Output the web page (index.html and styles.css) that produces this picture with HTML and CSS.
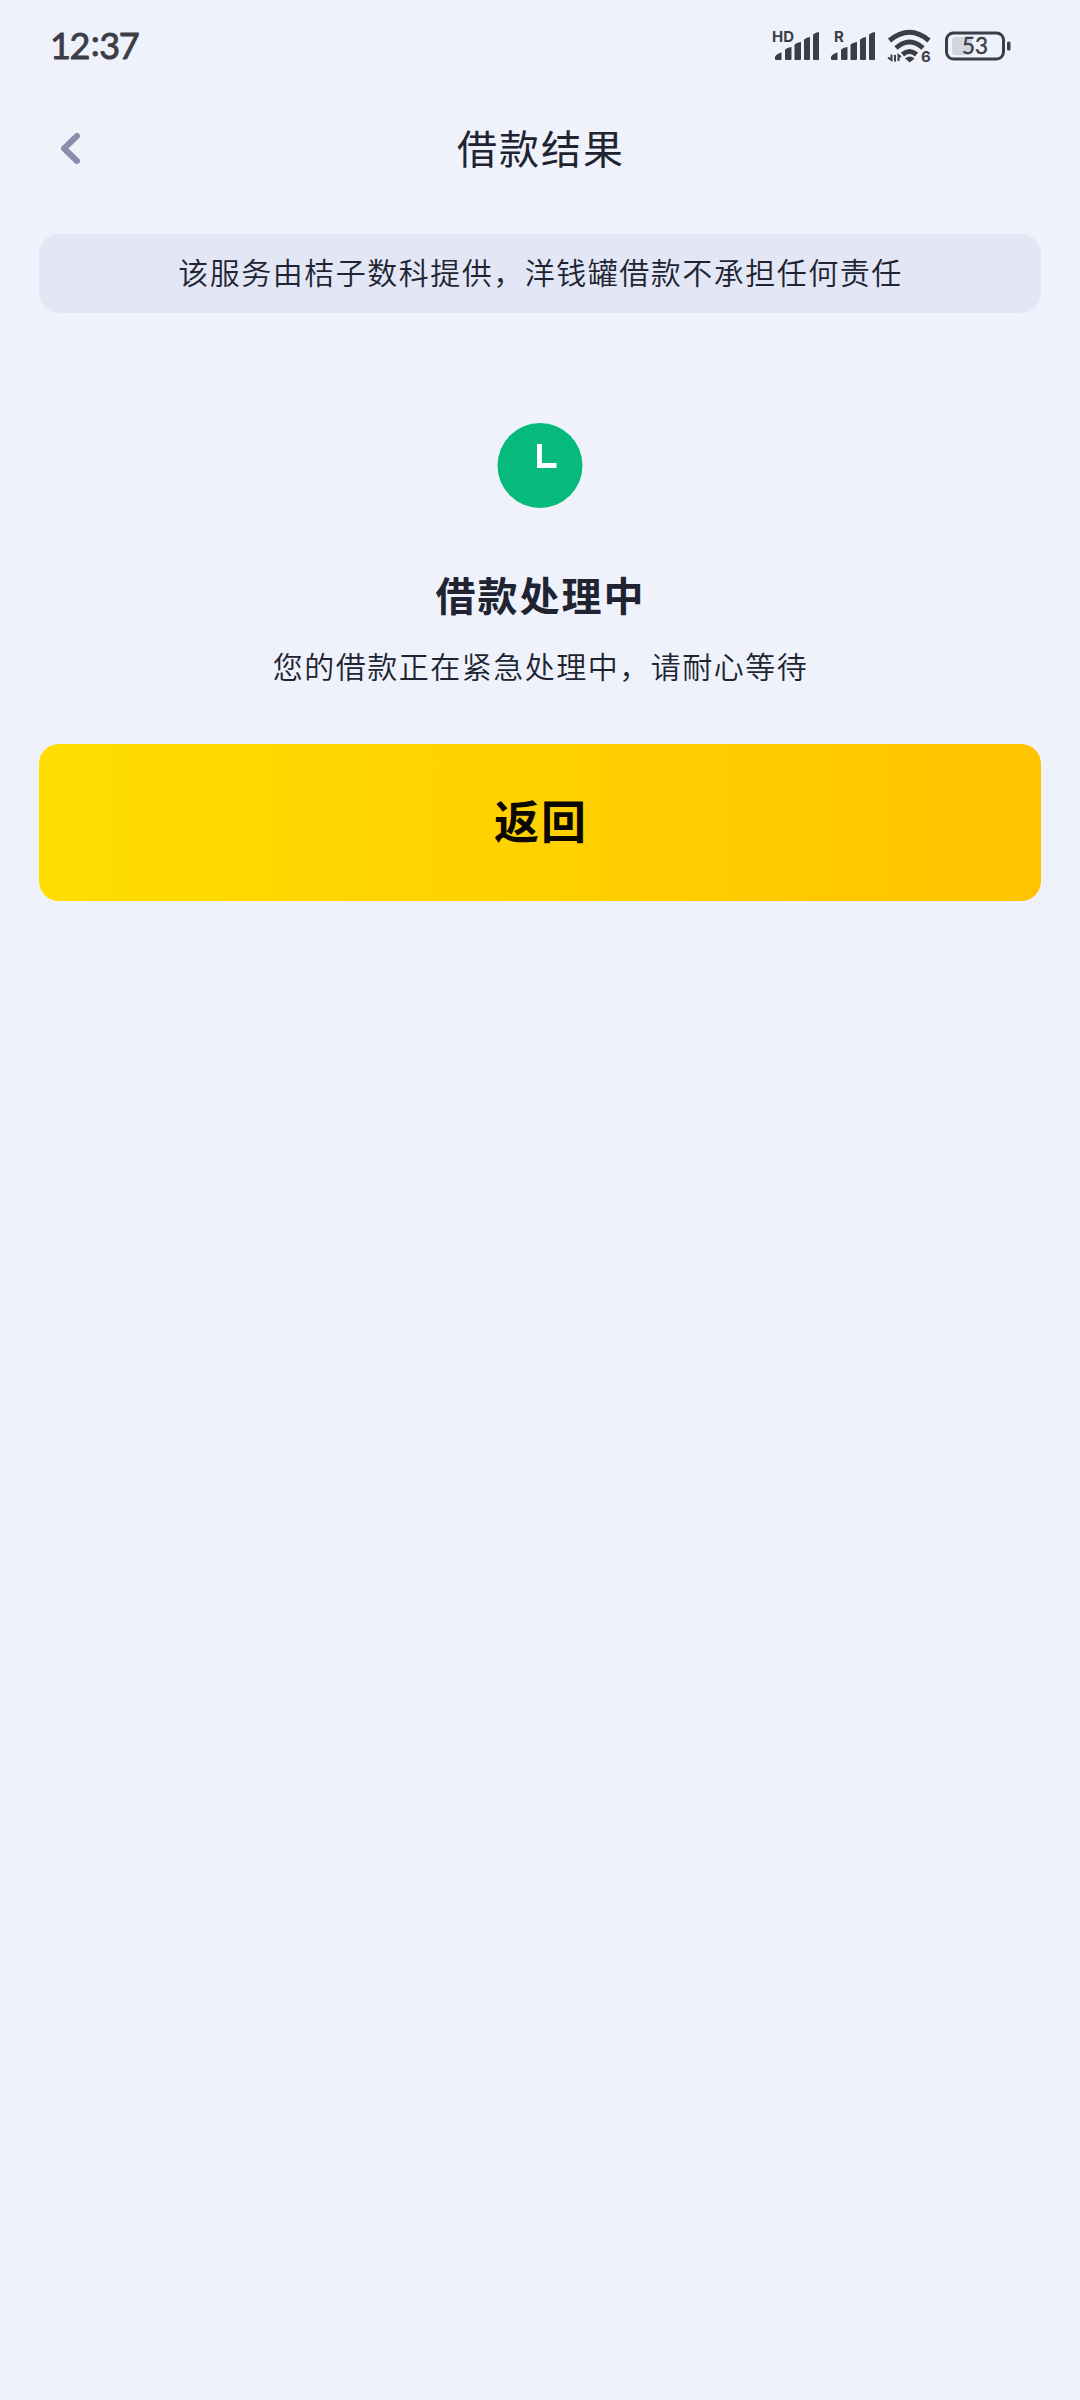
FILE: index.html
```html
<!DOCTYPE html>
<html lang="zh-CN">

<head>
     <meta charset="UTF-8">
     <meta name="viewport" content="width=device-width, initial-scale=1.0">
     <title>借款结果</title>
     <link rel="stylesheet" href="styles.css">
</head>

<body>

     <div id="wrapper">
          <!-- Status bar -->
          <div class="status-bar">
               <span class="time">12<span class="colon">:</span>37</span>
               <div class="status-icons">
                    <svg class="signal" width="48" height="36" viewBox="0 -2 48 36">
                         <text class="net-label" x="0" y="12" textLength="22" lengthAdjust="spacingAndGlyphs">HD</text>
                         <path d="M3 27q1-3 6.500-4.500v6.500q0 1-1 1H4q-1 0-1-1zM13 20q1-2 6.500-3v12q0 1-1 1H14q-1 0-1-1zM22.500 15q1-2 6.500-3v17q0 1-1 1h-4.500q-1 0-1-1zM32 10q1-2 6-3v22q0 1-1 1h-4q-1 0-1-1zM41 5q1-2 6-3v27q0 1-1 1h-4q-1 0-1-1z" />
                    </svg>
                    <svg class="signal" width="48" height="36" viewBox="0 -2 48 36">
                         <text class="net-label" x="4" y="12">R</text>
                         <path d="M1 27q1-3 6.500-4.500v6.500q0 1-1 1H2q-1 0-1-1zM11 20q1-2 6.500-3v12q0 1-1 1H12q-1 0-1-1zM20.500 15q1-2 6.500-3v17q0 1-1 1h-4.500q-1 0-1-1zM30 10q1-2 6-3v22q0 1-1 1h-4q-1 0-1-1zM39 5q1-2 6-3v27q0 1-1 1h-4q-1 0-1-1z" />
                    </svg>
                    <svg class="wifi" width="46" height="38" viewBox="0 -2 46 38">
                         <path class="wave" d="M1.500 11.500Q21.500-5 41 11.500M8 19Q21.500 7 35 19M14.500 25.500Q21.500 19.500 28.500 25.500" />
                         <path d="M17 29.500q4.700-4 9.500 0l-4.700 4z" />
                         <path class="arrows" d="M0 28.500l3.500 2.500v-5.500M7 26v6.500M10.500 32v-6l2.500 2" />
                         <text class="net-label" x="33" y="33">6</text>
                    </svg>
                    <svg class="battery" width="66" height="30" viewBox="0 0 66 30">
                         <rect class="level" x="7" y="6" width="20" height="18" rx="3" />
                         <rect class="shell" x="1.500" y="2" width="57" height="26" rx="7" />
                         <rect x="62" y="10.500" width="3.500" height="9" rx="1.500" />
                         <text class="percent" x="30" y="23" text-anchor="middle">53</text>
                    </svg>
               </div>
          </div>

          <!-- Nav bar -->
          <div class="nav-bar">
               <button class="back-btn" aria-label="返回">
                    <svg width="22" height="34" viewBox="0 0 22 34">
                         <path d="M17 4L4 16.500l13 12.500" />
                    </svg>
               </button>
               <h1>借款结果</h1>
          </div>

          <div class="notice">该服务由桔子数科提供，洋钱罐借款不承担任何责任</div>

          <!-- Loan result -->
          <div class="result">
               <svg class="clock" width="86" height="86" viewBox="0 0 86 86">
                    <circle cx="43" cy="43.500" r="42.500" />
                    <path d="M42.500 22v21.500H59.500" />
               </svg>
               <h2>借款处理中</h2>
               <p>您的借款正在紧急处理中，请耐心等待</p>
          </div>

          <button class="return-btn">返回</button>
     </div>

</body>

</html>
```
FILE: styles.css
```css
* {
     padding: 0;
     margin: 0;
     box-sizing: border-box;
     font-family: "Noto Sans CJK SC", sans-serif;
}

html,
body {
     width: 100%;
     height: 100%;
}

body {
     background: #eff2fa;
     color: #202432;
}

#wrapper {
     width: 100%;
     min-height: 100%;
     padding: 0 39px;
     display: flex;
     flex-direction: column;
}

.status-bar {
     height: 90px;
     padding: 2px 30px 0 11px;
     display: flex;
     align-items: center;
     justify-content: space-between;
}

.time {
     display: flex;
     padding-bottom: 2px;
     font-family: Lato, sans-serif;
     font-size: 36px;
     font-weight: 400;
     line-height: 40px;
     letter-spacing: -1.5px;
     color: #3b3d47;
     -webkit-text-stroke: .9px #3b3d47;
}

.colon {
     padding: 0 1px 0 2px;
     margin-top: -3px;
     font-family: inherit;
}

.status-icons {
     display: flex;
     align-items: center;
     fill: #3b3d47;
}

.status-icons svg {
     overflow: visible;
}

.signal {
     margin-right: 10px;
}

.wifi {
     margin-right: 11px;
}

.net-label {
     font-family: Inter, sans-serif;
     font-size: 15px;
     font-weight: 700;
}

.wave {
     fill: none;
     stroke: #3b3d47;
     stroke-width: 5;
}

.arrows {
     fill: none;
     stroke: #3b3d47;
     stroke-width: 2;
}

.level {
     fill: #d4d6df;
}

.shell {
     fill: none;
     stroke: #3b3d47;
     stroke-width: 3;
}

.percent {
     font-family: Lato, sans-serif;
     font-size: 22.5px;
     font-weight: 400;
     stroke: #3b3d47;
     stroke-width: .4;
}

.nav-bar {
     height: 118px;
     display: flex;
     align-items: center;
}

.back-btn {
     width: 62px;
     height: 60px;
     padding-left: 21px;
     display: flex;
     align-items: center;
     border: none;
     background: none;
}

.back-btn path {
     fill: none;
     stroke: #8c8dab;
     stroke-width: 6;
     stroke-linecap: round;
     stroke-linejoin: round;
}

.nav-bar h1 {
     flex: 1;
     margin-right: 60px;
     padding-bottom: 4px;
     font-size: 40px;
     font-weight: 400;
     line-height: 60px;
     letter-spacing: 2px;
     text-align: center;
}

.notice {
     height: 79px;
     margin-top: 26px;
     padding-left: 1px;
     border-radius: 20px;
     background: #e3e6f4;
     font-size: 30px;
     font-weight: 350;
     line-height: 75px;
     letter-spacing: 1.5px;
     text-align: center;
}

.result {
     display: flex;
     flex-direction: column;
     align-items: center;
}

.clock {
     margin-top: 109px;
     overflow: visible;
}

.clock circle {
     fill: #06b97c;
}

.clock path {
     fill: none;
     stroke: #fff;
     stroke-width: 5;
}

.result h2 {
     margin-top: 56px;
     padding-left: 1px;
     font-size: 40px;
     font-weight: 700;
     line-height: 60px;
     letter-spacing: 2px;
}

.result p {
     margin-top: 19px;
     padding-left: 1px;
     font-size: 30px;
     font-weight: 350;
     line-height: 45px;
     letter-spacing: 1.5px;
}

.return-btn {
     height: 157px;
     margin-top: 56px;
     padding: 0 0 7px 2px;
     border: none;
     border-radius: 20px;
     background: linear-gradient(90deg, #ffde00, #ffc300);
     color: #0b0800;
     font-size: 45px;
     font-weight: 700;
     letter-spacing: 2px;
}
```
